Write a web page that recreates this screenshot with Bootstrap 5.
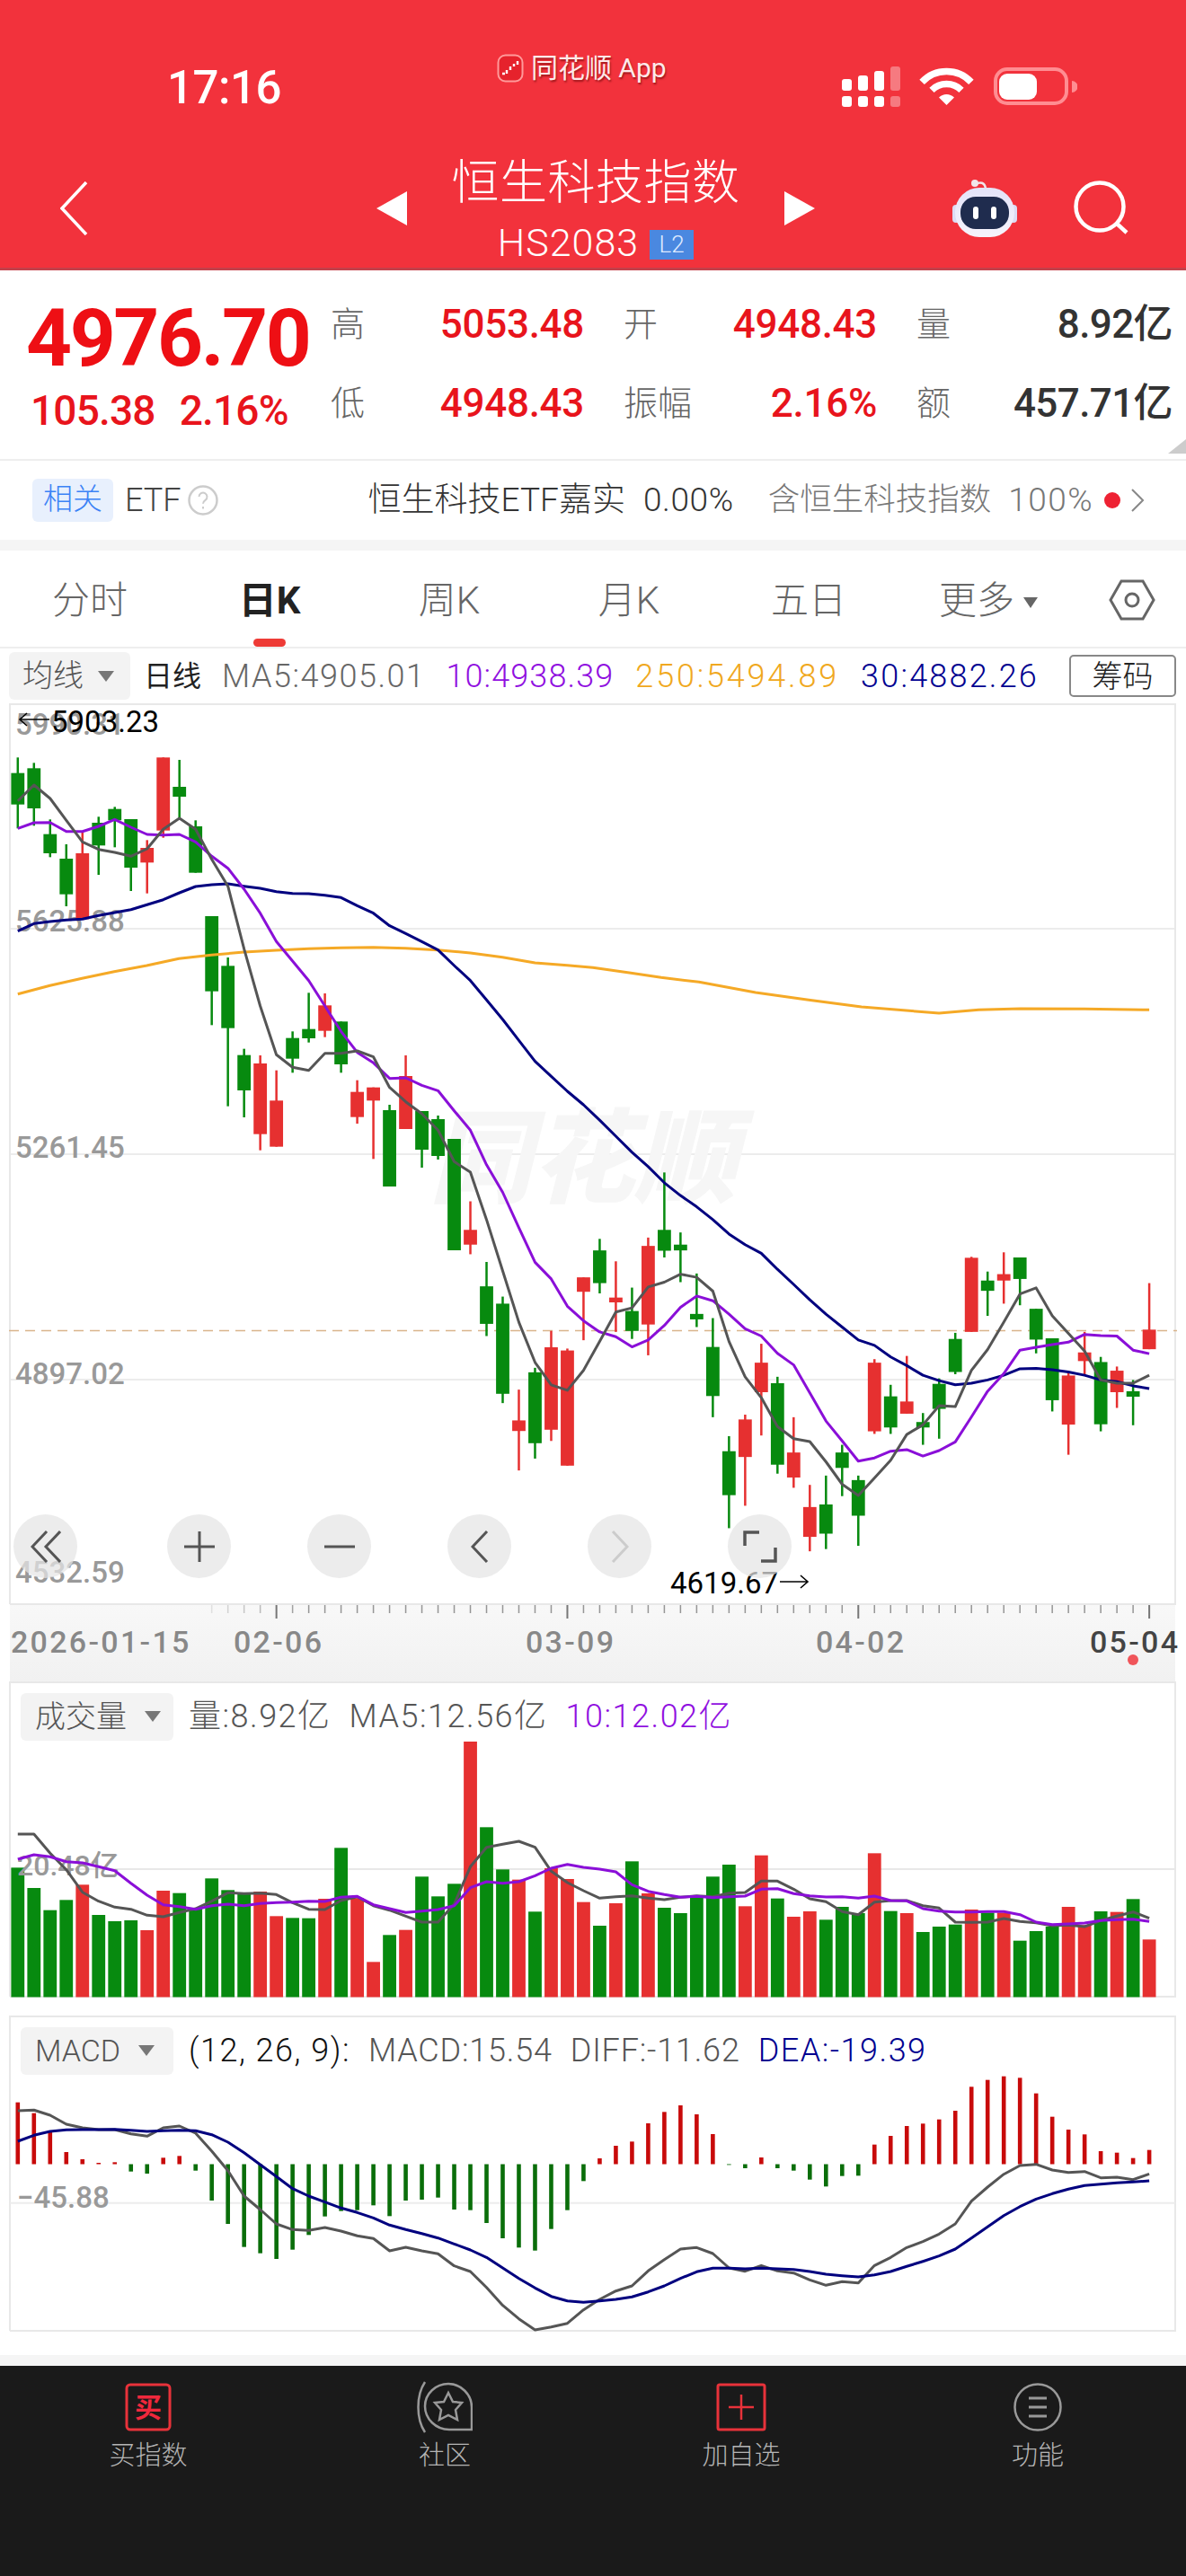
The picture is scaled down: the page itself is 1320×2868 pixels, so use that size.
<!DOCTYPE html>
<html lang="zh-CN">
<head>
    <meta charset="UTF-8">
    <meta name="viewport" content="width=device-width, initial-scale=1.0">
    <title>恒生科技指数</title>
    <link href="https://cdn.jsdelivr.net/npm/bootstrap@5.3.0/dist/css/bootstrap.min.css" rel="stylesheet">
    <style>
        body {
            width: 1320px;
            background-color: #fff;
            font-family: Roboto, "Noto Sans CJK SC", sans-serif;
            color: #333;
        }
        .app-header { height: 301px; background-color: #f2323c; border-bottom: 3px solid #c4404a; color: #fff; }
        .status-row { height: 165px; }
        .status-time { margin: 72px 0 0 186px; font-size: 51px; line-height: 52px; font-weight: 500; letter-spacing: -.5px; }
        .status-app { margin: 56px 0 0 240px; font-size: 30px; line-height: 40px; height: 40px; text-shadow: 1px 2px 2px rgba(90, 0, 0, .55); color: #fdeaea; }
        .status-icons { margin: 74px 121px 0 auto; }
        .nav-row { height: 133px; padding-left: 67px; }
        .title-block { width: 420px; text-align: center; }
        .title-main { font-size: 53px; line-height: 76px; font-weight: 300; letter-spacing: .5px; }
        .title-sub { font-size: 43px; line-height: 56px; font-weight: 300; letter-spacing: 1px; }
        .level-tag { display: inline-block; width: 49px; height: 33px; line-height: 33px; font-size: 26px; background-color: #4a88e0; color: #dfeaff; margin-left: 12px; vertical-align: 4px; letter-spacing: 0; }

        .quote-block { height: 212px; border-bottom: 2px solid #eee; padding: 35px 0 0 29px; position: relative; }
        .quote-price { width: 339px; margin-top: -3px; }
        .price-big { font-size: 89px; line-height: 88px; font-weight: 700; color: #ee0f14; letter-spacing: -2.4px; }
        .price-change { font-size: 46px; line-height: 56px; margin: 8px 0 0 5px; color: #e8141c; font-weight: 500; letter-spacing: -.8px; }
        .price-change span + span { margin-left: 27px; }
        .quote-col { width: 282px; margin-right: 44px; }
        .quote-pair { height: 88px; line-height: 50px; align-items: flex-start; }
        .quote-label { font-size: 38px; color: #666; font-weight: 300; }
        .quote-red { font-size: 44px; color: #e8141c; font-weight: 500; letter-spacing: -.3px; }
        .quote-dark { font-size: 44px; color: #333; font-weight: 500; letter-spacing: -.6px; }
        .corner-mark { position: absolute; right: 0; bottom: 6px; width: 0; height: 0; border-left: 20px solid transparent; border-bottom: 16px solid #ccc; }

        .related-row { height: 88px; padding-left: 36px; font-size: 36px; font-weight: 300; }
        .related-tag { width: 90px; height: 48px; line-height: 46px; background-color: #e8f0fd; color: #3b82f6; text-align: center; border-radius: 6px; font-size: 33px; }
        .related-etf { margin: 0 7px 0 13px; color: #444; }
        .related-fund { margin-left: 167px; color: #333; font-size: 37px; }
        .related-pct { margin-left: 20px; color: #333; font-size: 37px; letter-spacing: .6px; }
        .related-hold { margin-left: 38px; color: #777; font-size: 35.5px; }
        .related-share { margin-left: 19px; color: #777; font-size: 37px; letter-spacing: 1.5px; }
        .red-dot { width: 18px; height: 18px; background-color: #ee2233; border-radius: 50%; margin: 0 11px 0 12px; }
        .page-gap { height: 12px; background-color: #f5f5f5; }

        .tab-row { height: 109px; border-bottom: 2px solid #eee; position: relative; padding-top: 3px; }
        .tab-item { width: 200px; text-align: center; font-size: 42px; font-weight: 300; color: #666; }
        .tab-item.is-active { color: #222; font-weight: 700; position: relative; }
        .tab-pill { position: absolute; left: 282px; bottom: 0; width: 36px; height: 9px; background-color: #ee3b36; border-radius: 5px; }
        .tab-caret { display: inline-block; margin-left: 10px; vertical-align: 6px; border-left: 8px solid transparent; border-right: 8px solid transparent; border-top: 12px solid #666; }

        .ma-row { height: 61px; font-size: 36px; font-weight: 300; }
        .select-chip { display: flex; align-items: center; background-color: #f3f3f3; border-radius: 6px; color: #555; letter-spacing: 0; font-size: 34px; }
        .select-chip i { display: block; border-left: 9px solid transparent; border-right: 9px solid transparent; border-top: 12px solid #777; }
        .chip-main { width: 135px; height: 53px; margin-left: 10px; padding-left: 15px; }
        .chip-main i { margin-left: 16px; }
        .day-line { margin-left: 15px; color: #222; font-weight: 400; font-size: 32px; }
        .ma-gray { margin-left: 23px; color: #666; letter-spacing: 1.5px; }
        .ma-purple { margin-left: 23px; color: #9010e0; letter-spacing: 1.1px; }
        .ma-orange { margin-left: 24px; color: #f0a820; letter-spacing: 2.8px; }
        .ma-navy { margin-left: 24px; color: #000090; letter-spacing: 2.2px; }
        .btn-chips { margin-left: auto; margin-right: 11px; width: 119px; height: 47px; padding: 0; border: 2px solid #888; border-radius: 5px; font-size: 34px; line-height: 40px; color: #222; background-color: #fff; font-weight: 300; }

        .chart-wrap { position: relative; display: block; }
        .chart-wrap svg { display: block; }
        .svg-axis { font-size: 33px; font-weight: 500; fill: #999; font-family: Roboto, "Noto Sans CJK SC", sans-serif; }
        .svg-mark { font-size: 33px; fill: #000; font-family: Roboto, sans-serif; }
        .svg-date { font-size: 34px; font-weight: 500; fill: #888; letter-spacing: 2.3px; font-family: Roboto, sans-serif; }
        .water-mark { font-size: 114px; font-weight: 900; font-style: italic; fill: #f6f6f6; font-family: "Noto Sans CJK SC", sans-serif; }
        .chart-tools { position: absolute; left: 15px; top: 903px; gap: 85px; }
        .tool-btn { width: 71px; height: 71px; padding: 0; border: 0; background-color: rgba(228, 228, 228, .72); display: flex; align-items: center; justify-content: center; }
        .tool-btn:first-child { margin-right: 15px; }

        .panel-head { position: absolute; left: 23px; top: 12px; font-size: 36px; font-weight: 300; letter-spacing: 1.5px; }
        .chip-panel { width: 170px; height: 53px; padding-left: 16px; }
        .chip-panel i { margin-left: 20px; }
        .panel-gray { margin-left: 17px; color: #555; }
        .panel-gray2 { margin-left: 20px; color: #555; }
        .panel-purple { margin-left: 20px; color: #9010e0; }
        .panel-black { margin-left: 17px; color: #111; }
        .panel-macd { margin-left: 20px; color: #555; letter-spacing: .8px; }
        .panel-navy { margin-left: 20px; color: #000090; }

        .bottom-bar { height: 234px; background-color: #1a1a1a; padding-top: 16px; }
        .bar-item { text-align: center; height: 100px; }
        .bar-icon { height: 60px; display: flex; align-items: center; justify-content: center; }
        .bar-label { font-size: 29px; line-height: 40px; margin-top: 4px; color: #b4b4b4; font-weight: 300; }
    </style>
</head>
<body>
    <header class="app-header">
        <div class="status-row d-flex">
            <div class="status-time">17:16</div>
            <div class="status-app d-flex align-items-center gap-2">
                <svg width="30" height="32" viewBox="0 0 30 32">
                    <rect x="1.5" y="1.5" width="27" height="29" rx="8" fill="#e6222c" stroke="#ff9a9a" stroke-width="2"/>
                    <path d="M6 22h3M11 18v4M15 14v4M19 11v3M23 8v4" stroke="#fff" stroke-width="2.4"/>
                </svg>
                <span>同花顺 App</span>
            </div>
            <div class="status-icons">
                <svg width="262" height="46" viewBox="0 0 262 46">
                    <g fill="#fff">
                        <rect x="0" y="14" width="11" height="13" rx="3"/><rect x="18" y="10" width="11" height="17" rx="3"/><rect x="36" y="5" width="11" height="22" rx="3"/>
                        <rect x="0" y="33" width="11" height="12" rx="3"/><rect x="18" y="33" width="11" height="12" rx="3"/><rect x="36" y="33" width="11" height="12" rx="3"/>
                    </g>
                    <g fill="#fff" opacity=".35"><rect x="54" y="0" width="11" height="27" rx="3"/><rect x="54" y="33" width="11" height="12" rx="3"/></g>
                    <path d="M89.1 17.4a37.5 37.5 0 0 1 54.8 0M100 26.3a23.5 23.5 0 0 1 33 0" fill="none" stroke="#fff" stroke-width="7.5"/>
                    <path d="M108 34.5a12 12 0 0 1 17 0L116.5 43z" fill="#fff"/>
                    <rect x="171" y="3" width="79" height="38" rx="13" fill="none" stroke="#ff8d92" stroke-width="4"/>
                    <rect x="175" y="8" width="42" height="29" rx="9" fill="#fff"/>
                    <path d="M256 16a6.500 6.500 0 0 1 0 13z" fill="#ff8d92"/>
                </svg>
            </div>
        </div>
        <div class="nav-row d-flex align-items-center">
            <svg width="31" height="60" viewBox="0 0 31 60"><path d="M29 1 2 30l27 29" fill="none" stroke="#fff" stroke-width="3.5"/></svg>
            <svg width="34" height="38" viewBox="0 0 34 38" style="margin-left:321px"><path d="M34 0v38L0 19z" fill="#fff"/></svg>
            <div class="title-block">
                <div class="title-main">恒生科技指数</div>
                <div class="title-sub">HS2083<span class="level-tag">L2</span></div>
            </div>
            <svg width="34" height="38" viewBox="0 0 34 38"><path d="M0 0v38l34-19z" fill="#fff"/></svg>
            <svg width="72" height="66" viewBox="0 0 72 66" style="margin-left:153px">
                <defs><linearGradient id="robot-shell" x1="0" x2="0" y1="0" y2="1"><stop offset="0" stop-color="#e3e3f8"/><stop offset="1" stop-color="#f6f4fc"/></linearGradient></defs>
                <path d="M26 6c5-3 10-2 11 5" fill="none" stroke="#f1e6ea" stroke-width="2.500"/>
                <circle cx="25" cy="5" r="4" fill="#f1e6ea"/>
                <rect x="0" y="29" width="8" height="20" rx="4" fill="#dcdcf4"/><rect x="64" y="29" width="8" height="20" rx="4" fill="#dcdcf4"/>
                <rect x="3" y="10" width="66" height="55" rx="27" fill="url(#robot-shell)"/>
                <rect x="9" y="20" width="54" height="36" rx="17" fill="#1f2c4e"/>
                <rect x="23" y="31" width="6" height="14" rx="3" fill="#fff"/><rect x="43" y="31" width="6" height="14" rx="3" fill="#fff"/>
            </svg>
            <svg width="62" height="62" viewBox="0 0 62 62" style="margin-left:63px">
                <circle cx="29" cy="29" r="26.5" fill="none" stroke="#fff" stroke-width="4.500"/>
                <path d="M48 48l11 10" stroke="#fff" stroke-width="4.500"/>
            </svg>
        </div>
    </header>

    <section class="quote-block d-flex">
        <div class="quote-price">
            <div class="price-big">4976.70</div>
            <div class="price-change"><span>105.38</span><span>2.16%</span></div>
        </div>
        <div class="quote-col">
            <div class="quote-pair d-flex justify-content-between"><span class="quote-label">高</span><span class="quote-red">5053.48</span></div>
            <div class="quote-pair d-flex justify-content-between"><span class="quote-label">低</span><span class="quote-red">4948.43</span></div>
        </div>
        <div class="quote-col">
            <div class="quote-pair d-flex justify-content-between"><span class="quote-label">开</span><span class="quote-red">4948.43</span></div>
            <div class="quote-pair d-flex justify-content-between"><span class="quote-label">振幅</span><span class="quote-red">2.16%</span></div>
        </div>
        <div class="quote-col" style="margin:0;width:285px">
            <div class="quote-pair d-flex justify-content-between"><span class="quote-label">量</span><span class="quote-dark">8.92亿</span></div>
            <div class="quote-pair d-flex justify-content-between"><span class="quote-label">额</span><span class="quote-dark">457.71亿</span></div>
        </div>
        <div class="corner-mark"></div>
    </section>

    <section class="related-row d-flex align-items-center">
        <div class="related-tag">相关</div>
        <span class="related-etf">ETF</span>
        <svg width="34" height="34" viewBox="0 0 34 34"><circle cx="17" cy="17" r="15.5" fill="none" stroke="#ccc" stroke-width="2.5"/><path d="M12.500 13a4.500 4.500 0 1 1 7 3.800c-1.800 1.200-2.500 2-2.500 4M17 24v2.500" fill="none" stroke="#ccc" stroke-width="2"/></svg>
        <span class="related-fund">恒生科技ETF嘉实</span>
        <span class="related-pct">0.00%</span>
        <span class="related-hold">含恒生科技指数</span>
        <span class="related-share">100%</span>
        <span class="red-dot"></span>
        <svg width="16" height="26" viewBox="0 0 16 26"><path d="M2 1l12 12L2 25" fill="none" stroke="#888" stroke-width="2"/></svg>
    </section>
    <div class="page-gap"></div>

    <section class="tab-row d-flex align-items-center">
        <div class="tab-item">分时</div>
        <div class="tab-item is-active">日K</div>
        <div class="tab-item">周K</div>
        <div class="tab-item">月K</div>
        <div class="tab-item">五日</div>
        <div class="tab-item">更多<span class="tab-caret"></span></div>
        <svg class="ms-auto" width="52" height="46" viewBox="0 0 52 46" style="margin-right:34px"><path d="M14 2h24l12 21-12 21H14L2 23z" fill="none" stroke="#666" stroke-width="3"/><circle cx="26" cy="23" r="7" fill="none" stroke="#666" stroke-width="3"/></svg>
        <div class="tab-pill"></div>
    </section>

    <section class="ma-row d-flex align-items-center">
        <div class="select-chip chip-main"><span>均线</span><i></i></div>
        <span class="day-line">日线</span>
        <span class="ma-gray">MA5:4905.01</span>
        <span class="ma-purple">10:4938.39</span>
        <span class="ma-orange">250:5494.89</span>
        <span class="ma-navy">30:4882.26</span>
        <button type="button" class="btn btn-chips">筹码</button>
    </section>

    <div class="chart-wrap">
        <svg id="main-chart" width="1320" height="1089" viewBox="0 783 1320 1089"></svg>
        <div class="chart-tools d-flex">
            <button type="button" class="btn rounded-circle tool-btn" aria-label="左移到头"><svg width="34" height="36" viewBox="0 0 34 36"><path d="M18 1 2 18l16 17M33 1 17 18l16 17" fill="none" stroke="#555" stroke-width="3"/></svg></button>
            <button type="button" class="btn rounded-circle tool-btn" aria-label="放大"><svg width="36" height="36" viewBox="0 0 36 36"><path d="M18 1v34M1 18h34" stroke="#555" stroke-width="3"/></svg></button>
            <button type="button" class="btn rounded-circle tool-btn" aria-label="缩小"><svg width="36" height="36" viewBox="0 0 36 36"><path d="M1 18h34" stroke="#555" stroke-width="3"/></svg></button>
            <button type="button" class="btn rounded-circle tool-btn" aria-label="左移"><svg width="20" height="36" viewBox="0 0 20 36"><path d="M18 1 2 18l16 17" fill="none" stroke="#555" stroke-width="3"/></svg></button>
            <button type="button" class="btn rounded-circle tool-btn" aria-label="右移"><svg width="20" height="36" viewBox="0 0 20 36"><path d="M2 1l16 17L2 35" fill="none" stroke="#ccc" stroke-width="3"/></svg></button>
            <button type="button" class="btn rounded-circle tool-btn" aria-label="全屏"><svg width="38" height="36" viewBox="0 0 38 36"><path d="M18 2H2v15M20 34h16V19" fill="none" stroke="#555" stroke-width="3.5"/></svg></button>
        </div>
    </div>

    <div class="chart-wrap">
        <svg id="volume-chart" width="1320" height="372" viewBox="0 1872 1320 372"></svg>
        <div class="panel-head d-flex align-items-center">
            <div class="select-chip chip-panel"><span>成交量</span><i></i></div>
            <span class="panel-gray">量:8.92亿</span>
            <span class="panel-gray2">MA5:12.56亿</span>
            <span class="panel-purple">10:12.02亿</span>
        </div>
    </div>

    <div class="chart-wrap">
        <svg id="macd-chart" width="1320" height="378" viewBox="0 2244 1320 378"></svg>
        <div class="panel-head d-flex align-items-center">
            <div class="select-chip chip-panel"><span>MACD</span><i></i></div>
            <span class="panel-black">(12, 26, 9):</span>
            <span class="panel-macd">MACD:15.54</span>
            <span class="panel-macd">DIFF:-11.62</span>
            <span class="panel-navy">DEA:-19.39</span>
        </div>
    </div>

    <div class="page-gap"></div>

    <footer class="bottom-bar row g-0">
        <div class="col-3 bar-item">
            <div class="bar-icon"><svg width="52" height="54" viewBox="0 0 52 54"><rect x="2" y="2" width="48" height="50" rx="4" fill="none" stroke="#e8323a" stroke-width="3"/><text x="26" y="38" text-anchor="middle" font-size="30" font-weight="700" fill="#f0283c" font-family="Noto Sans CJK SC">买</text></svg></div>
            <div class="bar-label">买指数</div>
        </div>
        <div class="col-3 bar-item">
            <div class="bar-icon"><svg width="62" height="58" viewBox="0 0 62 58" fill="none" stroke="#999" stroke-width="2.5"><path d="M9 1C-1 16-1 42 9 57"/><path d="M61 54H36C21 54 9 42 9 28S21 3 35 3s26 12 26 26z"/><path d="M35 13l5 10 10 1-7 8 2 11-10-5-10 5 2-11-7-8 10-1z"/></svg></div>
            <div class="bar-label">社区</div>
        </div>
        <div class="col-3 bar-item">
            <div class="bar-icon"><svg width="56" height="54" viewBox="0 0 56 54"><rect x="2" y="2" width="52" height="50" rx="2" fill="none" stroke="#e8323a" stroke-width="3"/><path d="M28 13v28M14 27h28" stroke="#e8323a" stroke-width="2.5"/></svg></div>
            <div class="bar-label">加自选</div>
        </div>
        <div class="col-3 bar-item">
            <div class="bar-icon"><svg width="54" height="54" viewBox="0 0 54 54"><circle cx="27" cy="27" r="25.5" fill="none" stroke="#999" stroke-width="2.5"/><path d="M17 17h20M17 27h20M17 37h20" stroke="#999" stroke-width="3"/></svg></div>
            <div class="bar-label">功能</div>
        </div>
    </footer>

    <script>
        const RED = '#e63030', GREEN = '#078a0f';
        const xAt = i => 19.8 + 17.99 * i;
        // readings off the picture: upper half of the K chart, lower half
        const upper = v => 780 + v / 3;
        const lower = v => 1290 + v / 2.8;

        // [colour, wick top, body top, body bottom, wick bottom]
        const candlesUpper = [
            ['g',190,242,347,427],['g',208,226,360,418],['g',397,446,510,523],['g',480,528,647,687],['r',440,510,730,730],
            ['g',388,408,484,582],['g',355,362,400,490],['g',396,396,558,636],['r',466,492,541,644],['r',190,190,434,458],
            ['g',198,288,321,395],['g',400,420,575,575],['g',720,720,971,1084],['g',858,886,1094,1355],['g',1163,1184,1302,1392],
            ['r',1185,1212,1448,1502],['r',1235,1336,1490,1490],['g',1105,1127,1196,1243],['g',976,1097,1128,1142],['r',978,1018,1103,1124],
            ['g',1072,1072,1215,1243],['r',1268,1307,1391,1413],['r',1292,1292,1336,1531]
        ];
        const candlesMiddle = [
            ['g',1230,1236,1321,1321],['r',1175,1198,1257,1257],['g',1237,1237,1280,1300],['g',1242,1246,1287,1291],['g',1268,1268,1392,1392]
        ];
        const candlesLower = [
            ['r',133,222,268,298],['g',322,398,515,553],['g',430,452,733,762],['r',720,816,849,972],['g',652,666,887,935],
            ['r',537,588,845,880],['r',592,598,957,957],['r',370,370,415,566],['g',250,286,388,420],['r',320,433,448,540],
            ['g',402,475,537,562],['r',246,272,517,613],['g',43,222,287,308],['g',230,268,286,385],['g',358,484,501,525],
            ['g',497,587,740,806],['g',865,912,1049,1152],['r',798,813,930,1082],['r',577,636,728,863],['g',680,700,954,982],
            ['r',806,916,994,1026],['r',1017,1086,1179,1224],['g',988,1078,1169,1217],['g',892,916,964,1052],['g',988,1002,1113,1207],
            ['r',625,636,850,858],['g',705,741,838,858],['r',615,757,795,795],['g',793,821,838,892],['g',685,702,780,873],
            ['g',543,562,665,672],['r',306,309,540,540],['g',352,380,412,490],['r',292,360,380,452],['g',308,308,375,457],
            ['g',468,468,564,607],['g',560,560,753,788],['r',665,676,829,923],['r',540,604,631,675],['g',618,634,828,850],
            ['r',648,661,728,777],['g',690,725,742,831],['r',388,533,594,594]
        ];
        const candles = [
            ...candlesUpper.map(c => [c[0], ...c.slice(1).map(upper)]),
            ...candlesMiddle,
            ...candlesLower.map(c => [c[0], ...c.slice(1).map(lower)])
        ];

        const ma5 = [
            ...[335,282,327,400,472,497,507,520,495,430,393,430,530,620,830,1020,1183,1225,1235,1178,1178,1170,1190,1292,1340,1380,1435,1540].map(upper),
            ...[42,190,350,510,635,705,722,660,570,478,465,400,385,360,370,413,570,680,745,835,873,882,945,1015,1050,995,940,860,830,770,773,660,595,510,422,403,490,545,600,690,700,700,675].map(lower)
        ];
        const ma10 = [
            ...[427,408,407,437,437,420,397,423,447,449,447,472,520,560,630,710,805,870,935,1020,1105,1175,1210,1262,1260,1285,1303,1370,1435].map(upper),
            ...[19,105,215,323,375,460,505,540,555,587,565,520,463,428,443,485,530,553,607,643,730,818,880,943,933,912,907,927,910,883,805,725,670,597,588,580,572,548,552,553,597,608].map(lower)
        ];
        const ma30 = [
            ...[770,745,738,733,730,718,708,698,682,665,642,621,615,612,620,627,638,644,645,650,658,685,710,752,778,805,833,885,935,1000,1065,1135,1205,1255,1305,1350].map(upper),
            ...[-120,-70,-20,25,75,115,150,190,235,268,295,345,392,440,485,525,565,582,618,645,675,692,705,700,690,675,655,654,658,665,675,690,695,708,717].map(lower)
        ];
        const ma250 = [
            [47,980],[132,952],[217,928],[302,905],[388,885],[473,862],[559,850],[645,840],[730,834],[816,829],[901,826],[987,824],[1072,827],[1158,833],[1244,843],[1329,857],[1415,876],[1500,884],[1568,892]
        ].map(p => [p[0] / 2.376, upper(p[1])]).concat([
            [100,910],[180,925],[280,940],[430,975],[570,1000],[710,1023],[915,1044],[1020,1033],[1130,1029],[1300,1030],[1471,1033]
        ].map(p => [660 + p[0] / 2.376, upper(p[1])]));

        // volume tops, 1860 + v / 3
        const volTop = v => 1860 + v / 3;
        const volumes = [658,726,800,766,715,816,837,834,867,735,743,795,694,733,745,738,820,826,827,762,592,760,973,883,866,688,754,712,237,523,664,698,805,660,696,773,852,777,637,744,792,810,755,688,648,787,617,761,822,804,832,789,810,610,803,810,873,855,848,798,808,808,902,870,855,789,850,804,806,763,898];
        const volMa5 = [546,546,610,665,740,770,790,797,817,822,808,795,770,742,745,743,748,775,797,798,768,755,785,800,820,840,840,780,655,590,580,570,590,670,708,735,760,755,752,760,765,757,752,755,743,741,703,703,730,762,772,805,815,773,768,768,785,793,840,841,840,828,838,842,852,850,855,835,820,806,827];
        const volMa10 = [630,615,622,638,642,655,668,710,750,782,788,797,785,780,785,778,775,773,770,771,757,754,782,795,808,803,798,785,725,705,710,705,685,660,647,657,663,672,715,737,748,757,754,758,755,753,730,728,745,752,756,755,760,753,768,769,795,803,806,806,805,805,815,840,848,846,843,835,832,830,838];

        // MACD histogram ends, 2230 + v / 3; everything above the zero line is red
        const macdTop = v => 2230 + v / 3;
        const macdBars = [332,368,432,498,522,534,532,563,570,517,511,560,660,738,815,836,855,824,775,713,695,692,676,712,660,657,650,690,692,735,786,817,827,755,692,595,519,477,463,402,364,342,372,438,541,552,516,552,560,590,613,578,577,473,444,411,403,389,360,280,257,245,250,302,380,423,439,495,500,518,491];
        const macdDiff = [360,358,375,405,417,423,423,437,445,417,411,435,495,560,645,690,738,757,760,750,762,778,787,828,816,828,838,878,897,950,1010,1055,1092,1082,1070,1025,990,962,945,895,857,822,817,837,885,896,877,895,902,925,943,931,935,877,850,817,797,772,738,662,615,572,543,539,558,566,563,584,582,590,571];
        const macdDea = [462,442,429,424,423,423,422,425,429,427,425,427,440,465,500,540,580,620,645,665,685,700,718,742,757,770,785,805,825,850,885,920,952,980,995,1000,995,990,982,965,945,920,898,886,886,888,886,888,890,897,906,911,915,908,897,880,863,845,822,785,748,710,680,655,637,622,610,605,601,598,594];

        const rect = (x, y, w, h, fill) => `<rect x="${x}" y="${y}" width="${w}" height="${h}" fill="${fill}"/>`;
        const hLine = (x1, x2, y, stroke, extra = '') => `<line x1="${x1}" x2="${x2}" y1="${y}" y2="${y}" stroke="${stroke}" ${extra}/>`;
        const frame = (top, bottom) => `<path d="M11 ${bottom}V${top}H1308V${bottom}H11" fill="none" stroke="#e8e8e8" stroke-width="2"/>`;
        const polyline = (pts, stroke, width = 3) => `<polyline points="${pts.map(p => p[0].toFixed(1) + ',' + p[1].toFixed(1)).join(' ')}" fill="none" stroke="${stroke}" stroke-width="${width}" stroke-linejoin="round"/>`;
        const series = values => values.map((y, i) => [xAt(i), y]);

        // K chart
        let html = `<defs><linearGradient id="axis-bg" x1="0" x2="0" y1="0" y2="1"><stop offset="0" stop-color="#f8f8f8"/><stop offset="1" stop-color="#f1f1f1"/></linearGradient></defs>`;
        html += rect(11, 1786, 1297, 86, 'url(#axis-bg)');
        [1034, 1285, 1536].forEach(y => html += hLine(11, 1308, y, '#ececec', 'stroke-width="2"'));
        html += frame(784, 1786);
        html += `<text class="water-mark" x="478" y="1330">同花顺</text>`;
        html += hLine(10, 1310, 1481.5, '#d9b48c', 'stroke-width="1.6" stroke-dasharray="11 7"');
        [[5990.31, 818], [5625.88, 1037], [5261.45, 1289], [4897.02, 1541], [4532.59, 1762]].forEach(l => {
            html += `<text class="svg-axis" x="17" y="${l[1]}">${l[0].toFixed(2)}</text>`;
        });
        candles.forEach((c, i) => {
            const x = xAt(i), fill = c[0] === 'r' ? RED : GREEN;
            html += rect(x - 1.25, c[1], 2.5, c[4] - c[1], fill);
            html += rect(x - 7.4, c[2], 14.8, c[3] - c[2], fill);
        });
        html += polyline(ma250, '#f5a926');
        html += polyline(series(ma30), '#00007f');
        html += polyline(series(ma10), '#8a0fd8');
        html += polyline(series(ma5), '#555');
        html += `<text class="svg-mark" x="57" y="815">5903.23</text>`;
        html += `<path d="M55 801H22M30 794l-8 7 8 7" fill="none" stroke="#000" stroke-width="1.6"/>`;
        html += `<text class="svg-mark" x="746" y="1774">4619.67</text>`;
        html += `<path d="M868 1761h31M891 1754l8 7-8 7" fill="none" stroke="#000" stroke-width="1.6"/>`;
        for (let i = 12; i <= 70; i++) {
            const major = [16, 34, 52, 70].includes(i);
            const tick = major ? '#777' : `rgba(150,150,150,${Math.min(1, (i - 10) / 8)})`;
            html += rect(xAt(i) - (major ? 1 : .75), 1787, major ? 2 : 1.5, major ? 15 : 9, tick);
        }
        html += `<text class="svg-date" x="12" y="1840">2026-01-15</text>`;
        html += `<text class="svg-date" x="260" y="1840">02-06</text>`;
        html += `<text class="svg-date" x="585" y="1840">03-09</text>`;
        html += `<text class="svg-date" x="908" y="1840">04-02</text>`;
        html += `<text class="svg-date" x="1213" y="1840" style="fill:#444">05-04</text>`;
        html += `<circle cx="1261" cy="1848" r="6" fill="#f0555a"/>`;
        document.getElementById('main-chart').innerHTML = html;

        // volume panel
        html = rect(0, 1872, 1320, 372, '#fff');
        html += `<path d="M11 2223V1873H1308V2223H11" fill="none" stroke="#e8e8e8" stroke-width="2"/>`;
        html += hLine(11, 1308, 2081, '#e8e8e8', 'stroke-width="2"');
        volumes.forEach((v, i) => {
            const fill = candles[i][0] === 'r' ? RED : GREEN;
            html += rect(xAt(i) - 7.4, volTop(v), 14.8, 2223.5 - volTop(v), fill);
        });
        html += `<text class="svg-axis" x="19" y="2088" style="font-size:32px">20.48亿</text>`;
        html += polyline(series(volMa5.map(volTop)), '#555');
        html += polyline(series(volMa10.map(volTop)), '#8a0fd8');
        document.getElementById('volume-chart').innerHTML = html;

        // MACD panel
        html = `<path d="M11 2595V2245H1308V2595H11" fill="none" stroke="#e8e8e8" stroke-width="2"/>`;
        html += hLine(11, 1308, 2452.7, '#ececec', 'stroke-width="2"');
        html += `<text class="svg-axis" x="19" y="2458">−45.88</text>`;
        macdBars.forEach((v, i) => {
            const zero = 2409.5, y = macdTop(v);
            const fill = y < zero ? '#c80a0a' : '#0a6e0a';
            html += rect(xAt(i) - 2.3, Math.min(y, zero), 4.6, Math.abs(zero - y), fill);
        });
        html += polyline(series(macdDiff.map(macdTop)), '#555');
        html += polyline(series(macdDea.map(macdTop)), '#00007f');
        document.getElementById('macd-chart').innerHTML = html;
    </script>
    <script src="https://cdn.jsdelivr.net/npm/bootstrap@5.3.0/dist/js/bootstrap.bundle.min.js"></script>
</body>
</html>
